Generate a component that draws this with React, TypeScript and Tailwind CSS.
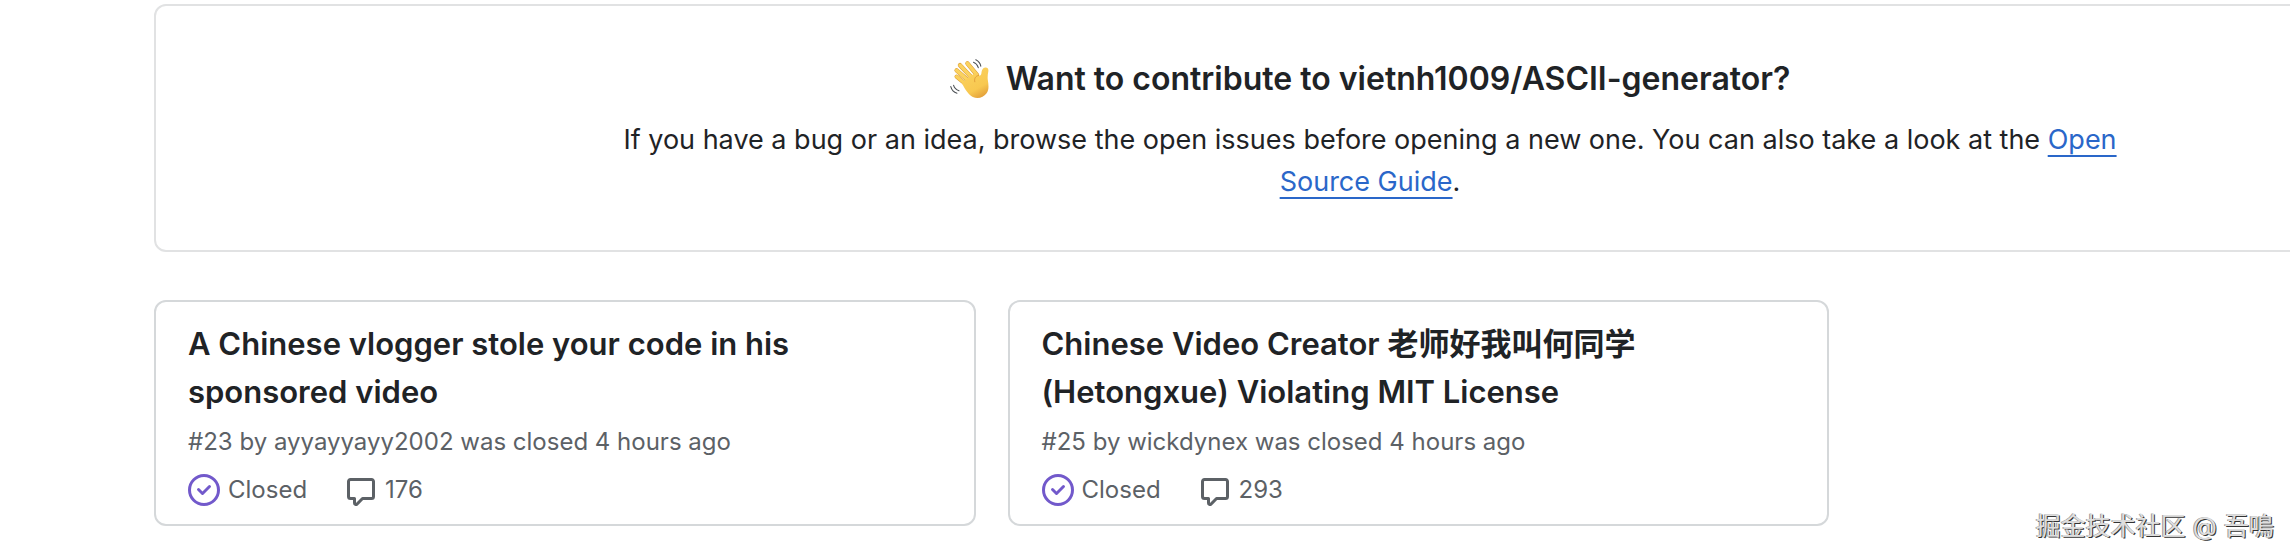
type Issue = {
  number: number;
  title: string;
  author: string;
  closed: string;
  comments: number;
};

const issues: Issue[] = [
  {
    number: 23,
    title: 'A Chinese vlogger stole your code in his sponsored video',
    author: 'ayyayyayy2002',
    closed: '4 hours ago',
    comments: 176,
  },
  {
    number: 25,
    title: 'Chinese Video Creator 老师好我叫何同学 (Hetongxue) Violating MIT License',
    author: 'wickdynex',
    closed: '4 hours ago',
    comments: 293,
  },
];

function WaveIcon() {
  return (
    <svg viewBox="0 0 40 40" className="size-10 shrink-0" aria-hidden="true">
      <defs>
        <linearGradient id="palm" x1="0.2" y1="0" x2="0.7" y2="1">
          <stop offset="0" stopColor="#fbd25f" />
          <stop offset="0.7" stopColor="#f8c850" />
          <stop offset="1" stopColor="#e3a03a" />
        </linearGradient>
      </defs>
      <g strokeLinecap="round" fill="none">
        <path d="M27 16 17.4 4.400" stroke="#dc9f3a" strokeWidth="4.4" />
        <path d="M27 16 17.4 4.400" stroke="#fbd25f" strokeWidth="3.4" />
        <path d="M23 20 10 6.200" stroke="#dc9f3a" strokeWidth="4.4" />
        <path d="M23 20 10 6.200" stroke="#fbd25f" strokeWidth="3.4" />
        <path d="M20 23 6.600 11.400" stroke="#dc9f3a" strokeWidth="4.4" />
        <path d="M20 23 6.600 11.400" stroke="#fbd25f" strokeWidth="3.4" />
        <path d="M18 27 6.600 17.600" stroke="#dc9f3a" strokeWidth="4.2" />
        <path d="M18 27 6.600 17.600" stroke="#fbd05a" strokeWidth="3.2" />
      </g>
      <path
        d="M12 24.500 16 20.500l9.800-7.200 2.600 3.100c1.700.5 2.700-.2 3-2.200.3-2.600 1.200-5.600 4-5.800 2.500-.1 3.300 1.800 2.900 4.200-.6 3.200-.9 5.800-.4 9 .7 4.400 1.300 9.200-1.500 13-2.900 3.900-8.600 5.800-13.600 3.400-4.300-2.100-7.800-8-10.800-13.500Z"
        fill="url(#palm)"
      />
      <path
        d="M28.600 16.400c-3.200.6-4.600 3.200-3.800 6.400"
        stroke="#dc9a38"
        strokeWidth="0.9"
        strokeLinecap="round"
        fill="none"
      />
      <path
        d="M23.500 3.200c2.200.8 4 2.800 4.800 5.400M25.800.8c2.600 1.200 4.400 3.400 5 6.400M3.600 26.400c.8 2.600 2.600 4.400 5.400 5.400M.8 27.600c.8 3.200 3 5.600 6.200 6.600"
        stroke="#4e5256"
        strokeWidth="1.1"
        strokeLinecap="round"
        fill="none"
      />
    </svg>
  );
}

function ClosedIcon() {
  return (
    <svg viewBox="0 0 16 16" className="size-8 fill-[#7259cb]" aria-hidden="true">
      <path d="M11.28 6.78a.75.75 0 0 0-1.06-1.06L7.25 8.69 5.78 7.22a.75.75 0 0 0-1.06 1.06l2 2a.75.75 0 0 0 1.06 0l3.5-3.5Z" />
      <path d="M16 8A8 8 0 1 1 0 8a8 8 0 0 1 16 0Zm-1.5 0a6.5 6.5 0 1 0-13 0 6.5 6.5 0 0 0 13 0Z" />
    </svg>
  );
}

function CommentIcon() {
  return (
    <svg viewBox="0 0 16 16" className="mt-1 size-8 fill-current" aria-hidden="true">
      <path d="M1 2.75C1 1.784 1.784 1 2.75 1h10.5c.966 0 1.75.784 1.75 1.75v7.5A1.75 1.75 0 0 1 13.25 12H9.06l-2.573 2.573A1.458 1.458 0 0 1 4 13.543V12H2.75A1.75 1.75 0 0 1 1 10.25Zm1.75-.25a.25.25 0 0 0-.25.25v7.5c0 .138.112.25.25.25h2a.75.75 0 0 1 .75.75v2.19l2.72-2.72a.749.749 0 0 1 .53-.22h4.5a.25.25 0 0 0 .25-.25v-7.5a.25.25 0 0 0-.25-.25Z" />
    </svg>
  );
}

function IssueCard({ issue }: { issue: Issue }) {
  return (
    <article className="rounded-xl border-2 border-[#d5d8da] px-8 pt-[18px] pb-4">
      <h3 className="max-w-[640px] text-[31px] leading-[48px] font-semibold">
        <a href={`#issue-${issue.number}`}>{issue.title}</a>
      </h3>
      <p className="mt-2 text-[24px] leading-9 text-[#5c6166]">
        #{issue.number} by {issue.author} was closed {issue.closed}
      </p>
      <div className="mt-3 flex items-center text-[24px] leading-9 text-[#5c6166]">
        <span className="flex items-center gap-2">
          <ClosedIcon />
          Closed
        </span>
        <a href={`#issue-${issue.number}-comments`} className="ml-[38px] flex items-center gap-2">
          <CommentIcon />
          {issue.comments}
        </a>
      </div>
    </article>
  );
}

export default function App() {
  return (
    <main className="relative min-h-screen overflow-hidden bg-white pt-1 pl-[154px] font-['Inter','Noto_Sans_CJK_SC',sans-serif] text-[#1f2326]">
      <section className="-mr-[296px] rounded-xl border-2 border-[#e1e2e3] pt-[49px] pb-[47px] text-center">
        <h2 className="flex items-center justify-center gap-4 text-[32px] leading-[48px] font-semibold">
          <WaveIcon />
          Want to contribute to vietnh1009/ASCII-generator?
        </h2>
        <p className="mx-auto mt-4 max-w-[1520px] text-[27px] leading-[42px]">
          If you have a bug or an idea, browse the open issues before opening a new one. You can also take a look at the{' '}
          <a href="#guide" className="text-[#2a67c9] underline decoration-2 underline-offset-6">
            Open Source Guide
          </a>
          .
        </p>
      </section>
      <div className="mt-12 mr-[461px] grid grid-cols-2 gap-8">
        {issues.map((issue) => (
          <IssueCard key={issue.number} issue={issue} />
        ))}
      </div>
      <p className="absolute right-4 bottom-3 text-[25px] leading-9 text-[#dedede] [text-shadow:-1px_0_0_#999999,1px_1px_0_#333333]">
        掘金技术社区 @ 吾鳴
      </p>
    </main>
  );
}
